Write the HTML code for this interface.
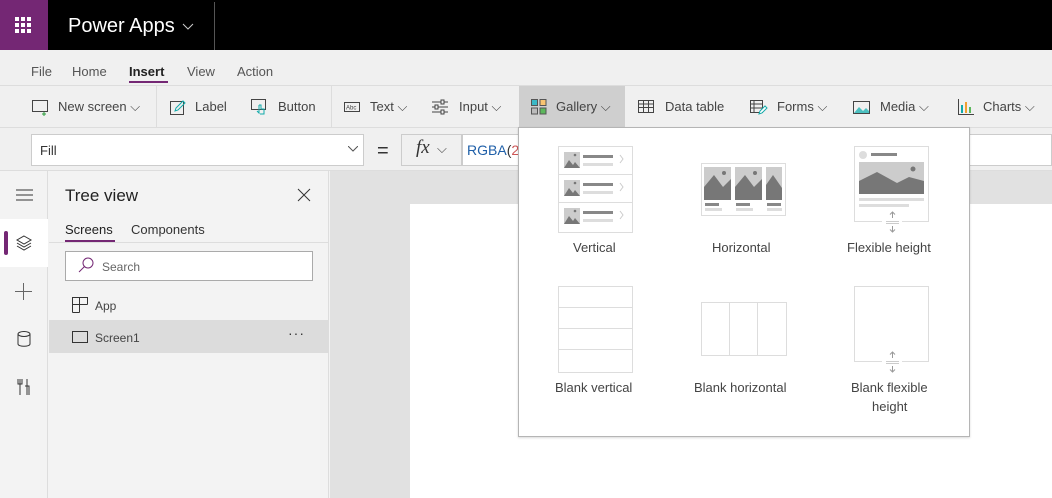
<!DOCTYPE html>
<html><head><style>
*{box-sizing:border-box;margin:0;padding:0}
body{width:1052px;height:498px;overflow:hidden;font-family:"Liberation Sans",sans-serif;background:#f3f3f3;position:relative;color:#333}
.a{position:absolute}
.t{font-size:13px;color:#444;white-space:nowrap}
</style></head><body>
<!-- top bar -->
<div class="a" style="left:0;top:0;width:1052px;height:50px;background:#000"></div>
<div class="a" style="left:0;top:0;width:48px;height:50px;background:#742774"></div>
<svg class="a" style="left:15px;top:17px" width="18" height="16"><g fill="#fff">
<rect x="0" y="0" width="4" height="4"/><rect x="6" y="0" width="4" height="4"/><rect x="12" y="0" width="4" height="4"/>
<rect x="0" y="6" width="4" height="4"/><rect x="6" y="6" width="4" height="4"/><rect x="12" y="6" width="4" height="4"/>
<rect x="0" y="12" width="4" height="4"/><rect x="6" y="12" width="4" height="4"/><rect x="12" y="12" width="4" height="4"/></g></svg>
<div class="a" style="left:68px;top:15px;font-size:20px;color:#fff">Power Apps</div>
<svg class="a" style="left:182px;top:23px" width="12" height="8"><path d="M1 1l5 5 5-5" stroke="#ccc" fill="none"/></svg>
<div class="a" style="left:214px;top:2px;width:1px;height:48px;background:#555"></div>
<!-- menu -->
<div class="a" style="left:0;top:50px;width:1052px;height:36px;background:#f0f0f0;border-bottom:1px solid #ddd"></div>
<div class="a t" style="left:31px;top:64px;color:#555">File</div>
<div class="a t" style="left:72px;top:64px;color:#555">Home</div>
<div class="a t" style="left:129px;top:64px;font-weight:bold;color:#222">Insert</div>
<div class="a" style="left:129px;top:81px;width:39px;height:2px;background:#742774"></div>
<div class="a t" style="left:187px;top:64px;color:#555">View</div>
<div class="a t" style="left:237px;top:64px;color:#555">Action</div>
<!-- toolbar -->
<div class="a" style="left:0;top:86px;width:1052px;height:42px;background:#f0f0f0;border-bottom:1px solid #ddd"></div>
<div class="a" style="left:156px;top:86px;width:1px;height:41px;background:#ddd"></div>
<div class="a" style="left:331px;top:86px;width:1px;height:41px;background:#ddd"></div>
<div class="a" style="left:519px;top:86px;width:106px;height:41px;background:#cfcfcf"></div>
<svg class="a" style="left:32px;top:100px" width="18" height="16"><rect x=".5" y=".5" width="15" height="11" fill="none" stroke="#444"/><path d="M12 12v4M10 14h4" stroke="#2a9d3a"/></svg>
<div class="a t" style="left:58px;top:99px">New screen ⌵</div>
<svg class="a" style="left:170px;top:99px" width="16" height="16"><rect x=".5" y="2.5" width="13" height="13" fill="none" stroke="#444"/><path d="M5 12l1-3 7-7 2 2-7 7z" fill="none" stroke="#1aa"/></svg>
<div class="a t" style="left:195px;top:99px">Label</div>
<svg class="a" style="left:251px;top:99px" width="18" height="18"><rect x=".5" y=".5" width="14" height="10" fill="none" stroke="#444"/><path d="M8 6v8l-2-2M8 6h2v4h3v5H9" fill="none" stroke="#1aa"/></svg>
<div class="a t" style="left:278px;top:99px">Button</div>
<svg class="a" style="left:344px;top:102px" width="16" height="10"><rect x=".5" y=".5" width="15" height="9" fill="none" stroke="#444"/><text x="2" y="7.5" font-size="6" fill="#444">Abc</text></svg>
<div class="a t" style="left:370px;top:99px">Text ⌵</div>
<svg class="a" style="left:432px;top:99px" width="18" height="16"><path d="M0 3h16M0 8h16M0 13h16" stroke="#444"/><rect x="9" y="1" width="3" height="4" fill="#f0f0f0" stroke="#444"/><rect x="3" y="6" width="3" height="4" fill="#f0f0f0" stroke="#444"/><rect x="9" y="11" width="3" height="4" fill="#f0f0f0" stroke="#444"/></svg>
<div class="a t" style="left:459px;top:99px">Input ⌵</div>
<svg class="a" style="left:531px;top:99px" width="16" height="16"><rect x=".5" y=".5" width="6" height="6" fill="#3bb8c6" stroke="#555"/><rect x="9" y=".5" width="6" height="6" fill="#f8c471" stroke="#555"/><rect x=".5" y="9" width="6" height="6" fill="#bbb" stroke="#555"/><rect x="9" y="9" width="6" height="6" fill="#5cb85c" stroke="#555"/></svg>
<div class="a t" style="left:556px;top:99px">Gallery ⌵</div>
<svg class="a" style="left:638px;top:100px" width="16" height="13"><rect x=".5" y=".5" width="15" height="12" fill="none" stroke="#444"/><path d="M0 4h16M0 7.5h16M5.5 0v13M10.5 0v13" stroke="#444"/></svg>
<div class="a t" style="left:665px;top:99px">Data table</div>
<svg class="a" style="left:750px;top:100px" width="18" height="15"><rect x=".5" y=".5" width="12" height="12" fill="none" stroke="#444"/><path d="M0 4h12M0 8h12M4 0v13" stroke="#444"/><path d="M9 14l1-3 5-5 2 2-5 5z" fill="#fff" stroke="#1aa"/></svg>
<div class="a t" style="left:777px;top:99px">Forms ⌵</div>
<svg class="a" style="left:853px;top:101px" width="17" height="13"><rect x=".5" y=".5" width="16" height="12" fill="none" stroke="#444"/><path d="M1 12l5-6 4 4 3-3 3 3v2H1z" fill="#4cc0c0"/></svg>
<div class="a t" style="left:880px;top:99px">Media ⌵</div>
<svg class="a" style="left:958px;top:99px" width="16" height="16"><path d="M.5 0v15.5H16" stroke="#444" fill="none"/><rect x="3" y="6" width="2" height="8" fill="#1aa"/><rect x="7" y="3" width="2" height="11" fill="#f0a030"/><rect x="11" y="8" width="2" height="6" fill="#5cb85c"/></svg>
<div class="a t" style="left:983px;top:99px">Charts ⌵</div>
<!-- formula bar -->
<div class="a" style="left:0;top:128px;width:1052px;height:43px;background:#f0f0f0;border-bottom:1px solid #ddd"></div>
<div class="a" style="left:31px;top:134px;width:333px;height:32px;background:#fff;border:1px solid #ccc"></div>
<div class="a t" style="left:40px;top:143px;color:#333">Fill</div>
<svg class="a" style="left:348px;top:146px" width="10" height="6"><path d="M0 0l5 5 5-5" stroke="#555" fill="none"/></svg>
<div class="a" style="left:377px;top:140px;font-size:20px;color:#333">=</div>
<div class="a" style="left:401px;top:134px;width:61px;height:32px;border:1px solid #ccc;background:#f0f0f0"></div>
<div class="a" style="left:416px;top:137px;font-family:'Liberation Serif',serif;font-style:italic;font-size:19px;color:#333">fx</div>
<div class="a t" style="left:437px;top:141px">⌵</div>
<div class="a" style="left:462px;top:134px;width:590px;height:32px;background:#fff;border:1px solid #ccc"></div>
<div class="a" style="left:467px;top:142px;font-size:14px;color:#1f5fa8">RGBA<span style="color:#333">(</span><span style="color:#c55">2</span></div>
<!-- left rail -->
<div class="a" style="left:0;top:171px;width:48px;height:327px;background:#f3f3f3;border-right:1px solid #ddd"></div>
<svg class="a" style="left:16px;top:189px" width="17" height="12"><path d="M0 1h17M0 6h17M0 11h17" stroke="#333"/></svg>
<div class="a" style="left:0;top:219px;width:48px;height:48px;background:#fff"></div>
<div class="a" style="left:4px;top:231px;width:4px;height:24px;background:#742774;border-radius:2px"></div>
<svg class="a" style="left:15px;top:235px" width="18" height="16"><g fill="none" stroke="#333"><path d="M9 1l7 4-7 4-7-4z"/><path d="M2 8l7 4 7-4"/><path d="M2 11l7 4 7-4"/></g></svg>
<svg class="a" style="left:15px;top:283px" width="17" height="17"><path d="M8.5 0v17M0 8.5h17" stroke="#666"/></svg>
<svg class="a" style="left:17px;top:331px" width="14" height="16"><ellipse cx="7" cy="3" rx="6" ry="2.5" fill="none" stroke="#333"/><path d="M1 3v10c0 3 12 3 12 0V3" fill="none" stroke="#333"/></svg>
<svg class="a" style="left:17px;top:378px" width="14" height="18"><path d="M3 1v16M10 1v16M1 1v5h4V1M8 8h4v9" fill="none" stroke="#333"/></svg>
<!-- tree panel -->
<div class="a" style="left:49px;top:171px;width:280px;height:327px;background:#f3f3f3;border-right:1px solid #ddd"></div>
<div class="a" style="left:65px;top:186px;font-size:17px;color:#222">Tree view</div>
<svg class="a" style="left:297px;top:188px" width="14" height="14"><path d="M1 1l12 12M13 1L1 13" stroke="#333"/></svg>
<div class="a t" style="left:65px;top:222px;color:#222">Screens</div>
<div class="a" style="left:65px;top:240px;width:50px;height:2px;background:#742774"></div>
<div class="a t" style="left:131px;top:222px;color:#333">Components</div>
<div class="a" style="left:49px;top:242px;width:280px;height:1px;background:#ddd"></div>
<div class="a" style="left:65px;top:251px;width:248px;height:30px;background:#fff;border:1px solid #aaa"></div>
<svg class="a" style="left:78px;top:257px" width="16" height="17"><circle cx="10" cy="6" r="5" fill="none" stroke="#742774"/><path d="M6.5 9.5L1 15" stroke="#742774"/></svg>
<div class="a" style="left:102px;top:260px;font-size:12px;color:#666">Search</div>
<svg class="a" style="left:72px;top:297px" width="16" height="16"><path d="M.5 7.5h15M7.5.5v15M.5 15.5V.5h15v7M7.5 15.5H.5" fill="none" stroke="#333"/></svg>
<div class="a t" style="left:95px;top:299px;font-size:12px">App</div>
<div class="a" style="left:49px;top:320px;width:280px;height:33px;background:#dcdcdc"></div>
<svg class="a" style="left:72px;top:331px" width="16" height="13"><rect x=".5" y=".5" width="15" height="11" fill="none" stroke="#333"/></svg>
<div class="a t" style="left:95px;top:331px;font-size:12px">Screen1</div>
<div class="a" style="left:288px;top:325px;font-size:14px;color:#333;letter-spacing:1px">···</div>
<!-- canvas -->
<div class="a" style="left:330px;top:171px;width:722px;height:327px;background:#e1e1e1"></div>
<div class="a" style="left:410px;top:204px;width:642px;height:294px;background:#fff"></div>
<!-- dropdown -->
<div class="a" style="left:518px;top:127px;width:452px;height:310px;background:#fff;border:1px solid #b5b5b5;box-shadow:0 1px 2px rgba(0,0,0,.15)"></div>
<!-- vertical -->
<svg class="a" style="left:558px;top:146px" width="76" height="87">
<rect x=".5" y=".5" width="74" height="86" fill="#fff" stroke="#ddd"/>
<path d="M0 28.5h75M0 56.5h75" stroke="#ddd"/>
<g id="r"><rect x="6" y="6" width="16" height="16" fill="#ccc"/><path d="M6 22l5-8 4 5 2-3 5 6z" fill="#777"/><circle cx="17" cy="9" r="1.3" fill="#777"/><rect x="25" y="9" width="30" height="3" fill="#888"/><rect x="25" y="17" width="30" height="3" fill="#ddd"/><path d="M62 9l3 4-3 4" stroke="#ccc" fill="none"/></g>
<use href="#r" y="28"/><use href="#r" y="56"/>
</svg>
<div class="a t" style="left:573px;top:240px">Vertical</div>
<!-- horizontal -->
<svg class="a" style="left:701px;top:163px" width="86" height="53">
<rect x=".5" y=".5" width="84" height="52" fill="#fff" stroke="#ddd"/>
<g id="c"><rect x="3" y="4" width="27" height="33" fill="#ccc"/><path d="M3 37V24l10-12 9 12 8-8v21z" fill="#777"/><circle cx="23" cy="10" r="2" fill="#777"/><rect x="4" y="40" width="14" height="3" fill="#888"/><rect x="4" y="45" width="17" height="3" fill="#ddd"/></g>
<use href="#c" x="31"/>
<g><rect x="65" y="4" width="16" height="33" fill="#ccc"/><path d="M65 37V22l7-10 9 13v12z" fill="#777"/><rect x="66" y="40" width="14" height="3" fill="#888"/><rect x="66" y="45" width="15" height="3" fill="#ddd"/></g>
</svg>
<div class="a t" style="left:712px;top:240px">Horizontal</div>
<!-- flexible -->
<svg class="a" style="left:854px;top:146px" width="77" height="87">
<rect x=".5" y=".5" width="74" height="75" fill="#fff" stroke="#ddd"/>
<circle cx="9" cy="9" r="4" fill="#ddd"/><rect x="17" y="7" width="26" height="3" fill="#888"/>
<rect x="5" y="16" width="65" height="32" fill="#ccc"/><path d="M5 48V35l18-9 20 11 12-6 15 4v13z" fill="#777"/><circle cx="59" cy="23" r="2.5" fill="#777"/>
<rect x="5" y="52" width="65" height="3" fill="#ddd"/><rect x="5" y="58" width="50" height="3" fill="#ddd"/>
<rect x="28" y="69" width="20" height="10" fill="#fff"/><path d="M32 75.5h13M32 77.5h13" stroke="#ccc"/><path d="M38.5 66v6M36 68.5l2.5-2.5 2.5 2.5M38.5 80v6M36 83.5l2.5 2.5 2.5-2.5" stroke="#999" fill="none"/>
</svg>
<div class="a t" style="left:847px;top:240px">Flexible height</div>
<!-- blank vertical -->
<svg class="a" style="left:558px;top:286px" width="76" height="88">
<rect x=".5" y=".5" width="74" height="86" fill="#fff" stroke="#ddd"/><path d="M0 21.5h75M0 42.5h75M0 63.5h75" stroke="#ddd"/></svg>
<div class="a t" style="left:555px;top:380px">Blank vertical</div>
<svg class="a" style="left:701px;top:302px" width="87" height="55">
<rect x=".5" y=".5" width="85" height="53" fill="#fff" stroke="#ddd"/><path d="M28.5 0v54M56.5 0v54" stroke="#ddd"/></svg>
<div class="a t" style="left:694px;top:380px">Blank horizontal</div>
<svg class="a" style="left:854px;top:286px" width="77" height="88">
<rect x=".5" y=".5" width="74" height="75" fill="#fff" stroke="#ddd"/>
<rect x="28" y="69" width="20" height="10" fill="#fff"/><path d="M32 75.5h13M32 77.5h13" stroke="#ccc"/><path d="M38.5 66v6M36 68.5l2.5-2.5 2.5 2.5M38.5 80v6M36 83.5l2.5 2.5 2.5-2.5" stroke="#999" fill="none"/>
</svg>
<div class="a t" style="left:851px;top:380px">Blank flexible</div>
<div class="a t" style="left:872px;top:399px">height</div>
</body></html>
